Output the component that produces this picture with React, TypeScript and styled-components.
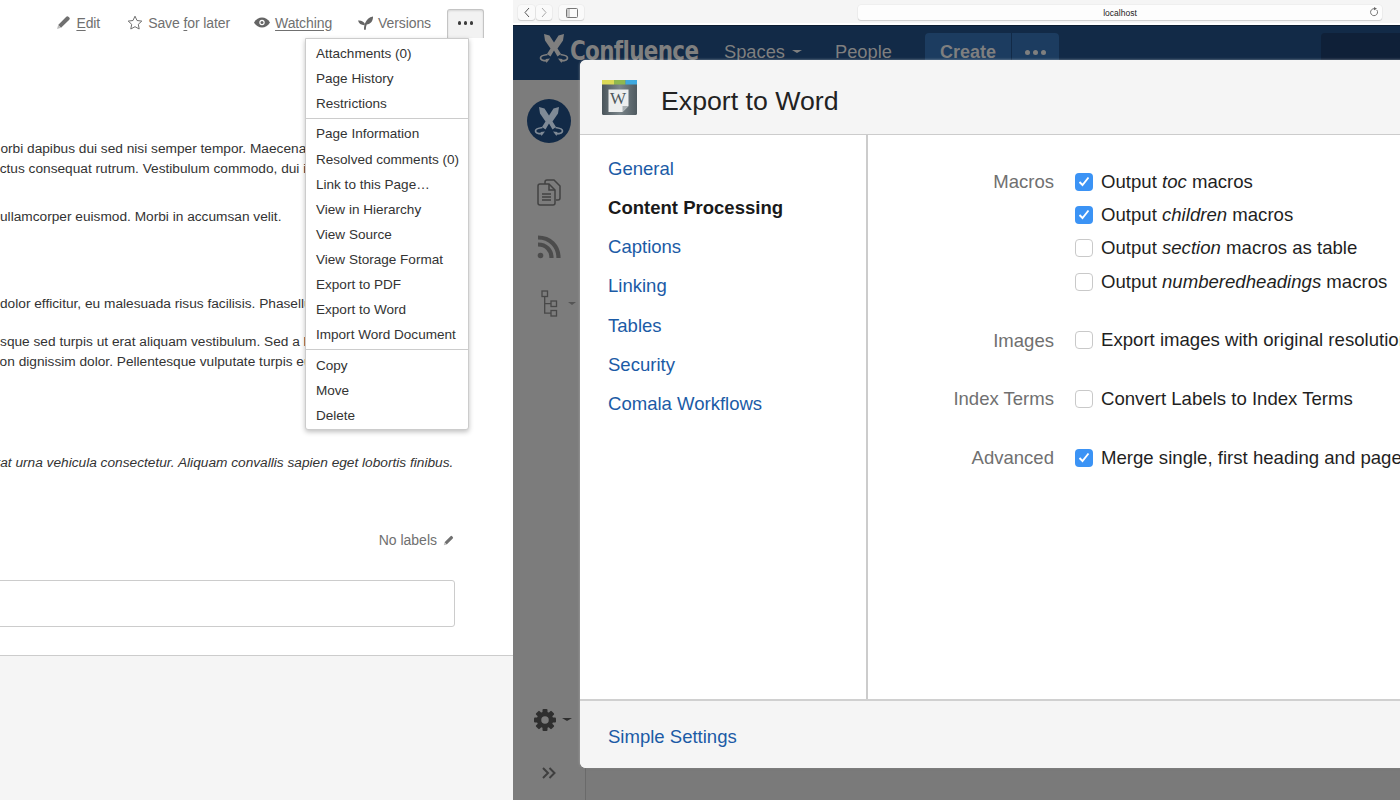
import React from "react";
import styled, { createGlobalStyle } from "styled-components";

const Global = createGlobalStyle`
  html, body { margin: 0; padding: 0; background: #fff; }
  #root { width: 1400px; height: 800px; }
`;

const Page = styled.div`
  display: flex; width: 1400px; height: 800px; overflow: hidden;
  font-family: "Liberation Sans", Arial, sans-serif;
`;

/* ---------- left pane ---------- */
const LeftPane = styled.section`
  position: relative; width: 513px; flex: none; display: flex; flex-direction: column;
  background: #fff; overflow: hidden; color: #333;
`;
const Toolbar = styled.div`
  display: flex; align-items: center; justify-content: flex-end; flex: none; box-sizing: border-box;
  height: 29px; margin-top: 9px; padding: 0 29px 2px 0; font-size: 14px; color: #707070;
`;
const Action = styled.a<{ $gap: number }>`
  display: flex; align-items: center; gap: 5px; margin-right: ${p => p.$gap}px;
  letter-spacing: -0.1px;
  u { text-underline-offset: 2px; }
`;
const MoreButton = styled.button`
  display: flex; align-items: center; justify-content: center; gap: 2.5px;
  width: 37px; height: 29px; margin-bottom: -2px; padding: 0 0 2px; border: 1px solid #c4c4c4; border-bottom: 0;
  border-radius: 3px 3px 0 0; background: #f2f2f2;
  box-shadow: inset 0 1px 2px rgba(0,0,0,.12);
`;
const Dot = styled.i<{ $c?: string; $s?: number }>`
  display: block; width: ${p => p.$s ?? 3.4}px; height: ${p => p.$s ?? 3.4}px;
  border-radius: 50%; background: ${p => p.$c ?? "#3c3c3c"};
`;
const Menu = styled.nav`
  position: absolute; left: 305px; top: 38px; width: 164px; height: 392px; box-sizing: border-box;
  padding-top: 2px; background: #fff; border: 1px solid #ccc; border-radius: 0 0 3px 3px;
  box-shadow: 0 2px 5px rgba(0,0,0,.25); z-index: 2;
`;
const MenuGroup = styled.div`
  padding-bottom: 2px;
  & + & { border-top: 1px solid #ccc; padding-top: 2.2px; }
`;
const MenuItem = styled.div`
  height: 25.1px; line-height: 25.1px; padding-left: 10px; font-size: 13.55px; color: #333;
  white-space: nowrap;
`;
const Article = styled.div`
  flex: none; height: 489px; padding-top: 101px; box-sizing: border-box;
`;
const Line = styled.p<{ $top: number; $shift: number; $italic?: boolean }>`
  margin: ${p => p.$top}px 0 0 ${p => -p.$shift}px; height: 20px; line-height: 20px;
  font-size: 13.7px; color: #333; white-space: nowrap;
  font-style: ${p => (p.$italic ? "italic" : "normal")};
`;
const LabelsRow = styled.div`
  display: flex; align-items: center; justify-content: flex-end; gap: 6px; flex: none;
  height: 20px; margin-top: 3px; padding-right: 59px; font-size: 14px; color: #707070;
`;
const CommentBox = styled.div`
  flex: none; box-sizing: border-box; height: 47px; width: 458px; margin: 30px 0 0 -3px;
  border: 1px solid #ccc; border-radius: 3px; background: #fff;
`;
const LeftFooter = styled.div`
  flex: 1; margin-top: 28px; border-top: 1px solid #ccc; background: #f5f5f5;
`;

/* ---------- right pane ---------- */
const RightPane = styled.section`
  position: relative; flex: 1; min-width: 0; display: flex; flex-direction: column;
  overflow: hidden; background: #7a7a7a;
`;
const BrowserBar = styled.div`
  display: flex; align-items: flex-start; flex: none; box-sizing: border-box; height: 25px;
  padding: 5px 18px 0 5px; background: #f5f5f5; border-bottom: 2px solid #fff;
`;
const ChromeGroup = styled.div<{ $after: number }>`
  display: flex; gap: 1px; margin-right: ${p => p.$after}px;
`;
const ChromeButton = styled.div<{ $w: number }>`
  display: flex; align-items: center; justify-content: center;
  width: ${p => p.$w}px; height: 15px; background: #fafafa; border-radius: 3px;
  box-shadow: 0 1px 1px rgba(0,0,0,.14), 0 0 0 .5px rgba(0,0,0,.05);
`;
const UrlBar = styled.div`
  position: relative; display: flex; align-items: center; justify-content: center;
  width: 524px; height: 15px; background: #fdfdfd; border-radius: 3px;
  box-shadow: 0 1px 1px rgba(0,0,0,.14), 0 0 0 .5px rgba(0,0,0,.05);
  font-size: 8.5px; color: #222;
`;
const Reload = styled.span`
  position: absolute; right: 3px; top: 2px; display: flex;
`;
const TopNav = styled.header`
  display: flex; flex: none; box-sizing: border-box; height: 55px; padding-top: 7px;
  background: #122a47; border-top: 1px solid #0c1c30;
`;
const Brand = styled.div`
  display: flex; align-items: flex-start; gap: 1px; width: 211px; padding-left: 26px; box-sizing: border-box;
  font-family: "DejaVu Sans Condensed", "Liberation Sans", sans-serif; font-weight: 700;
  font-size: 26px; line-height: 36px; color: #7f7f7f; letter-spacing: -0.75px;
`;
const BrandName = styled.span`
  display: block; transform: scaleX(0.92); transform-origin: left center;
`;
const NavLink = styled.div<{ $w: number }>`
  display: flex; align-items: flex-start; gap: 7px; width: ${p => p.$w}px;
  font-size: 18.3px; line-height: 38px; color: #7f7f7f;
`;
const Caret = styled.i<{ $c: string; $w: number }>`
  display: block; width: 0; height: 0; border-style: solid;
  border-width: ${p => p.$w * 0.75}px ${p => p.$w}px 0; border-color: ${p => p.$c} transparent transparent;
`;
const NavCaret = styled.span`
  padding-top: 17px;
`;
const CreateButton = styled.div`
  display: flex; justify-content: center; width: 86px; height: 48px; margin-right: 1px;
  border-radius: 4px 0 0 0; background: #1c3c60; color: #7f7f7f;
  font-size: 18px; font-weight: 700; line-height: 38px;
`;
const NavMore = styled.div`
  display: flex; justify-content: center; gap: 3px; padding-top: 17px; box-sizing: border-box;
  width: 47px; height: 48px; border-radius: 0 4px 0 0; background: #1c3c60;
`;
const SearchStub = styled.div`
  margin-left: auto; width: 79px; height: 48px; border-radius: 4px 0 0 0; background: #0f2038;
`;
const Workspace = styled.div`
  flex: 1; min-height: 0; display: flex;
`;
const SideBar = styled.aside`
  display: flex; flex-direction: column; align-items: center; width: 73px; box-sizing: border-box;
  background: #7c7c7c; border-right: 1px solid #6a6a6a; padding-top: 19px;
`;
const SideSlot = styled.div<{ $top: number; $shift?: number }>`
  position: relative; display: flex; margin-top: ${p => p.$top}px; margin-left: ${p => p.$shift ?? 0}px;
`;
const SideCaret = styled.span<{ $gap: number }>`
  position: absolute; left: 100%; top: 50%; margin: -2px 0 0 ${p => p.$gap}px;
`;
const SideSpacer = styled.div`
  flex: 1;
`;
const Dialog = styled.div`
  position: absolute; left: 67px; top: 60px; width: 860px; height: 708px; display: flex; flex-direction: column;
  border-radius: 6px; overflow: hidden; background: #fff; box-shadow: 0 0 2px 1px rgba(255,255,255,.25), 0 1px 2px rgba(0,0,0,.3);
`;
const DialogHeader = styled.div`
  display: flex; align-items: center; gap: 24px; flex: none; box-sizing: border-box; height: 75px;
  padding: 0 0 0 22px; background: #f5f5f5; border-bottom: 1px solid #ccc;
`;
const DialogTitle = styled.h1`
  margin: 8px 0 0; font-size: 26.7px; font-weight: 400; color: #222; line-height: 32px;
`;
const DialogBody = styled.div`
  flex: 1; min-height: 0; display: flex;
`;
const SideMenu = styled.ul`
  flex: none; width: 288px; box-sizing: border-box; margin: 0; padding: 13.6px 0 0 28px; list-style: none;
  border-right: 2px solid #ccc;
`;
const SideItem = styled.li<{ $active?: boolean }>`
  height: 39.3px; line-height: 39.3px; font-size: 18.55px;
  color: ${p => (p.$active ? "#1a1a1a" : "#1b5ba6")};
  font-weight: ${p => (p.$active ? 700 : 400)};
`;
const Form = styled.div`
  flex: 1; display: grid; grid-template-columns: 186px 1fr; column-gap: 21px; align-content: start;
  padding-top: 30px;
`;
const FieldLabel = styled.div`
  text-align: right; font-size: 18.55px; line-height: 33.3px; color: #707070;
`;
const FieldOptions = styled.div`
  display: flex; flex-direction: column; margin-bottom: 25.4px;
`;
const Option = styled.label`
  display: flex; align-items: center; gap: 8px; height: 33.3px; font-size: 18.6px; color: #1f1f1f;
  white-space: nowrap;
`;
const Check = styled.span<{ $on?: boolean }>`
  display: flex; align-items: center; justify-content: center; flex: none; width: 18px; height: 18px;
  box-sizing: border-box; border-radius: 4px;
  background: ${p => (p.$on ? "#3b93f5" : "#fff")};
  border: ${p => (p.$on ? "none" : "1px solid #c9c9c9")};
`;
const DialogFooter = styled.div`
  display: flex; align-items: center; flex: none; box-sizing: border-box; height: 69px; padding: 4px 0 0 28px;
  background: #f5f5f5; border-top: 2px solid #d0d0d0; font-size: 18.55px; color: #1b5ba6;
`;

/* ---------- drawings ---------- */
const Pencil = ({ size = 15, c = "#707070" }: { size?: number; c?: string }) => (
  <svg width={size} height={size} viewBox="0 0 14 14">
    <path d="M2 9.300L9.600 1.600a1.400 1.400 0 0 1 2 0l.8.8a1.400 1.400 0 0 1 0 2L4.700 12z" fill={c} />
    <path d="M2 9.300L4.700 12 1 13z" fill="#bbb" />
  </svg>
);
const Star = () => (
  <svg width="16" height="15" viewBox="0 0 16 15">
    <path d="M8 1.200l2 4.300 4.800.6-3.500 3.200 .9 4.700L8 11.700 3.800 14l.9-4.700L1.200 6.100 6 5.500z" fill="none" stroke="#707070" strokeWidth="1" />
  </svg>
);
const Eye = () => (
  <svg width="16" height="11" viewBox="0 0 16 11">
    <path d="M0 5.500C2 2 5 .5 8 .5s6 1.500 8 5c-2 3.500-5 5-8 5s-6-1.500-8-5z" fill="#656565" />
    <circle cx="8" cy="5.500" r="2.700" fill="#fff" />
    <circle cx="8" cy="5.500" r="1.500" fill="#656565" />
  </svg>
);
const Sprout = () => (
  <svg width="15" height="14" viewBox="0 0 15 14">
    <path d="M6 13.800c0-3 .4-5.400 1.300-7C8.500 3.800 11 1.200 15 .5c.2 4.200-2 7.500-6.300 8-.6 1.500-.9 3.200-.9 5.300z" fill="#656565" />
    <path d="M6.200 9.200C3.200 9.200 .8 7.400 0 4.500c3.200-.4 5.800 1 7 3.500z" fill="#656565" />
  </svg>
);
const Back = ({ c }: { c: string }) => (
  <svg width="8" height="11" viewBox="0 0 8 11"><path d="M6 1L2 5.500 6 10" fill="none" stroke={c} strokeWidth="1" /></svg>
);
const Forward = ({ c }: { c: string }) => (
  <svg width="8" height="11" viewBox="0 0 8 11"><path d="M2 1l4 4.500L2 10" fill="none" stroke={c} strokeWidth="1" /></svg>
);
const SidebarGlyph = () => (
  <svg width="12" height="10" viewBox="0 0 12 10">
    <rect x=".5" y=".5" width="11" height="9" rx="1" fill="none" stroke="#777" />
    <rect x="1" y="1" width="3" height="8" fill="#ccc" />
  </svg>
);
const ReloadGlyph = () => (
  <svg width="10" height="10" viewBox="0 0 10 10">
    <path d="M7.800 3a3.500 3.500 0 1 1-2.300-1.300" fill="none" stroke="#666" strokeWidth=".9" />
    <path d="M5 0l3 1.700L5 3.300z" fill="#666" />
  </svg>
);
const BladePaths = ({ c }: { c: string }) => (
  <>
    <path d="M5 1l5.500 1.500L15 9.500l4.500-7L25 1l-1 6.500-5.500 8 3.500 5.500-3.500 2.500-3.500-6-3.500 6L8 21l3.500-5.500L6 7.500z" fill={c} />
    <path d="M8.500 21.500C4.500 22 1.500 23.500 1.500 25c0 1.800 3 2.800 6.500 2.800M21.500 21.500c4 .5 7 2 7 3.500 0 1.800-3 2.800-6.500 2.800" fill="none" stroke={c} strokeWidth="1.700" />
    <path d="M11 25.500l-3.500 4.500-1-4zM19 25.500l3.500 4.500 1-4z" fill={c} />
  </>
);
const Blades = ({ size, c }: { size: number; c: string }) => (
  <svg width={size} height={size} viewBox="0 0 30 30"><BladePaths c={c} /></svg>
);
const Badge = () => (
  <svg width="44" height="44" viewBox="0 0 44 44">
    <circle cx="22" cy="22" r="22" fill="#122a47" />
    <g transform="translate(7 7)"><BladePaths c="#7f8a96" /></g>
  </svg>
);
const Docs = () => (
  <svg width="24" height="28" viewBox="0 0 24 28" fill="none" stroke="#424242" strokeWidth="1.500">
    <path d="M8 5V3a2 2 0 0 1 2-2h7l6 6v12a2 2 0 0 1-2 2h-2" />
    <path d="M3 5h9l6 6v13a2 2 0 0 1-2 2H3a2 2 0 0 1-2-2V7a2 2 0 0 1 2-2z" />
    <path d="M5 15h9M5 18h9M5 21h9" strokeWidth="1.300" />
    <path d="M12 5v6h6" />
  </svg>
);
const Rss = () => (
  <svg width="24" height="24" viewBox="0 0 24 24">
    <circle cx="3.500" cy="20.500" r="2.800" fill="#4c4c4c" />
    <path d="M1 9.500C9 9.500 14.500 15 14.500 23M1 2.500C13 2.500 21.500 11 21.500 23" fill="none" stroke="#4c4c4c" strokeWidth="4.200" />
  </svg>
);
const TreeGlyph = () => (
  <svg width="17" height="27" viewBox="0 0 17 27" fill="none" stroke="#484848" strokeWidth="1.300">
    <rect x="1" y="1" width="5.500" height="5.500" />
    <rect x="10" y="11" width="5.500" height="5.500" />
    <rect x="10" y="20.500" width="5.500" height="5.500" />
    <path d="M3.700 6.500V23.200H10M3.700 13.700H10" />
  </svg>
);
const Gear = () => (
  <svg width="22" height="22" viewBox="0 0 22 22">
    <g fill="#2f2f2f">
      {[0, 45, 90, 135, 180, 225, 270, 315].map(a => (
        <rect key={a} x="8.500" y="0" width="5" height="5" rx="1" transform={`rotate(${a} 11 11)`} />
      ))}
    </g>
    <circle cx="11" cy="11" r="6" fill="none" stroke="#2f2f2f" strokeWidth="4.500" />
  </svg>
);
const Chevrons = () => (
  <svg width="14" height="12" viewBox="0 0 14 12" fill="none" stroke="#3f3f3f" strokeWidth="2">
    <path d="M1 1l5 5-5 5M7.500 1l5 5-5 5" />
  </svg>
);
const WordBadge = () => (
  <svg width="35" height="35" viewBox="0 0 35 35">
    <defs>
      <linearGradient id="wbg" x1="0" y1="0" x2="1" y2="0">
        <stop offset="0" stopColor="#4a555b" />
        <stop offset=".5" stopColor="#7a858a" />
        <stop offset="1" stopColor="#4f5a60" />
      </linearGradient>
    </defs>
    <rect width="35" height="35" rx="1.500" fill="url(#wbg)" />
    <rect width="12" height="4.500" fill="#dbd957" />
    <rect x="12" width="11.500" height="4.500" fill="#8fb84f" />
    <rect x="23.500" width="11.500" height="4.500" fill="#3fa9e0" />
    <path d="M6.500 9.500h20v16.500l-6 6h-14z" fill="#eceeee" />
    <path d="M20.500 32v-6h6z" fill="#a9b0b3" />
    <text x="16" y="24" textAnchor="middle" fontFamily="Liberation Serif, serif" fontSize="17" fill="#4e585d">W</text>
  </svg>
);
const Tick = () => (
  <svg width="12" height="11" viewBox="0 0 12 11">
    <path d="M1.500 6l3 3 6-7.500" fill="none" stroke="#fff" strokeWidth="1.900" />
  </svg>
);

const groups = [
  ["Attachments (0)", "Page History", "Restrictions"],
  ["Page Information", "Resolved comments (0)", "Link to this Page…", "View in Hierarchy", "View Source", "View Storage Format", "Export to PDF", "Export to Word", "Import Word Document"],
  ["Copy", "Move", "Delete"],
];
const sections = ["General", "Content Processing", "Captions", "Linking", "Tables", "Security", "Comala Workflows"];

const Opt = ({ on, children }: { on?: boolean; children: React.ReactNode }) => (
  <Option><Check $on={on}>{on && <Tick />}</Check><span>{children}</span></Option>
);

export default function App() {
  return (
    <Page>
      <Global />
      <LeftPane>
        <Toolbar>
          <Action $gap={27}><Pencil /><span><u>E</u>dit</span></Action>
          <Action $gap={24}><Star /><span>Save <u>f</u>or later</span></Action>
          <Action $gap={26}><Eye /><u>Watching</u></Action>
          <Action $gap={16}><Sprout /><span>Versions</span></Action>
          <MoreButton><Dot /><Dot /><Dot /></MoreButton>
        </Toolbar>
        <Menu>
          {groups.map((g, i) => (
            <MenuGroup key={i}>
              {g.map(t => <MenuItem key={t}>{t}</MenuItem>)}
            </MenuGroup>
          ))}
        </Menu>
        <Article>
          <Line $top={0} $shift={11}>Morbi dapibus dui sed nisi semper tempor. Maecenas lorem ipsum dolor sit</Line>
          <Line $top={0} $shift={11}>luctus consequat rutrum. Vestibulum commodo, dui in lorem ipsum dolor sit</Line>
          <Line $top={28} $shift={0}>ullamcorper euismod. Morbi in accumsan velit.</Line>
          <Line $top={67} $shift={0}>dolor efficitur, eu malesuada risus facilisis. Phasellus lorem ipsum dolor</Line>
          <Line $top={18} $shift={3}>isque sed turpis ut erat aliquam vestibulum. Sed a lorem ipsum dolor sit</Line>
          <Line $top={0} $shift={8}>non dignissim dolor. Pellentesque vulputate turpis eu lorem ipsum dolor</Line>
          <Line $top={81} $shift={12} $italic>erat urna vehicula consectetur. Aliquam convallis sapien eget lobortis finibus.</Line>
        </Article>
        <LabelsRow>No labels <Pencil size={11} /></LabelsRow>
        <CommentBox />
        <LeftFooter />
      </LeftPane>
      <RightPane>
        <BrowserBar>
          <ChromeGroup $after={7}>
            <ChromeButton $w={17}><Back c="#555" /></ChromeButton>
            <ChromeButton $w={16}><Forward c="#aaa" /></ChromeButton>
          </ChromeGroup>
          <ChromeGroup $after={274}>
            <ChromeButton $w={25}><SidebarGlyph /></ChromeButton>
          </ChromeGroup>
          <UrlBar>localhost<Reload><ReloadGlyph /></Reload></UrlBar>
        </BrowserBar>
        <TopNav>
          <Brand><Blades size={30} c="#7f7f7f" /><BrandName>Confluence</BrandName></Brand>
          <NavLink $w={111}>Spaces <NavCaret><Caret $c="#7f7f7f" $w={5} /></NavCaret></NavLink>
          <NavLink $w={90}>People</NavLink>
          <CreateButton>Create</CreateButton>
          <NavMore><Dot $c="#7f7f7f" $s={5} /><Dot $c="#7f7f7f" $s={5} /><Dot $c="#7f7f7f" $s={5} /></NavMore>
          <SearchStub />
        </TopNav>
        <Workspace>
          <SideBar>
            <Badge />
            <SideSlot $top={36}><Docs /></SideSlot>
            <SideSlot $top={28}><Rss /></SideSlot>
            <SideSlot $top={31}><TreeGlyph /><SideCaret $gap={10}><Caret $c="#555" $w={4} /></SideCaret></SideSlot>
            <SideSpacer />
            <SideSlot $top={0} $shift={-8}><Gear /><SideCaret $gap={6}><Caret $c="#2f2f2f" $w={5} /></SideCaret></SideSlot>
            <SideSlot $top={36}><Chevrons /></SideSlot>
            <SideSlot $top={21} />
          </SideBar>
        </Workspace>
        <Dialog>
          <DialogHeader>
            <WordBadge />
            <DialogTitle>Export to Word</DialogTitle>
          </DialogHeader>
          <DialogBody>
            <SideMenu>
              {sections.map(s => <SideItem key={s} $active={s === "Content Processing"}>{s}</SideItem>)}
            </SideMenu>
            <Form>
              <FieldLabel>Macros</FieldLabel>
              <FieldOptions>
                <Opt on>Output <em>toc</em> macros</Opt>
                <Opt on>Output <em>children</em> macros</Opt>
                <Opt>Output <em>section</em> macros as table</Opt>
                <Opt>Output <em>numberedheadings</em> macros</Opt>
              </FieldOptions>
              <FieldLabel>Images</FieldLabel>
              <FieldOptions><Opt>Export images with original resolution</Opt></FieldOptions>
              <FieldLabel>Index Terms</FieldLabel>
              <FieldOptions><Opt>Convert Labels to Index Terms</Opt></FieldOptions>
              <FieldLabel>Advanced</FieldLabel>
              <FieldOptions><Opt on>Merge single, first heading and page title</Opt></FieldOptions>
            </Form>
          </DialogBody>
          <DialogFooter>Simple Settings</DialogFooter>
        </Dialog>
      </RightPane>
    </Page>
  );
}
